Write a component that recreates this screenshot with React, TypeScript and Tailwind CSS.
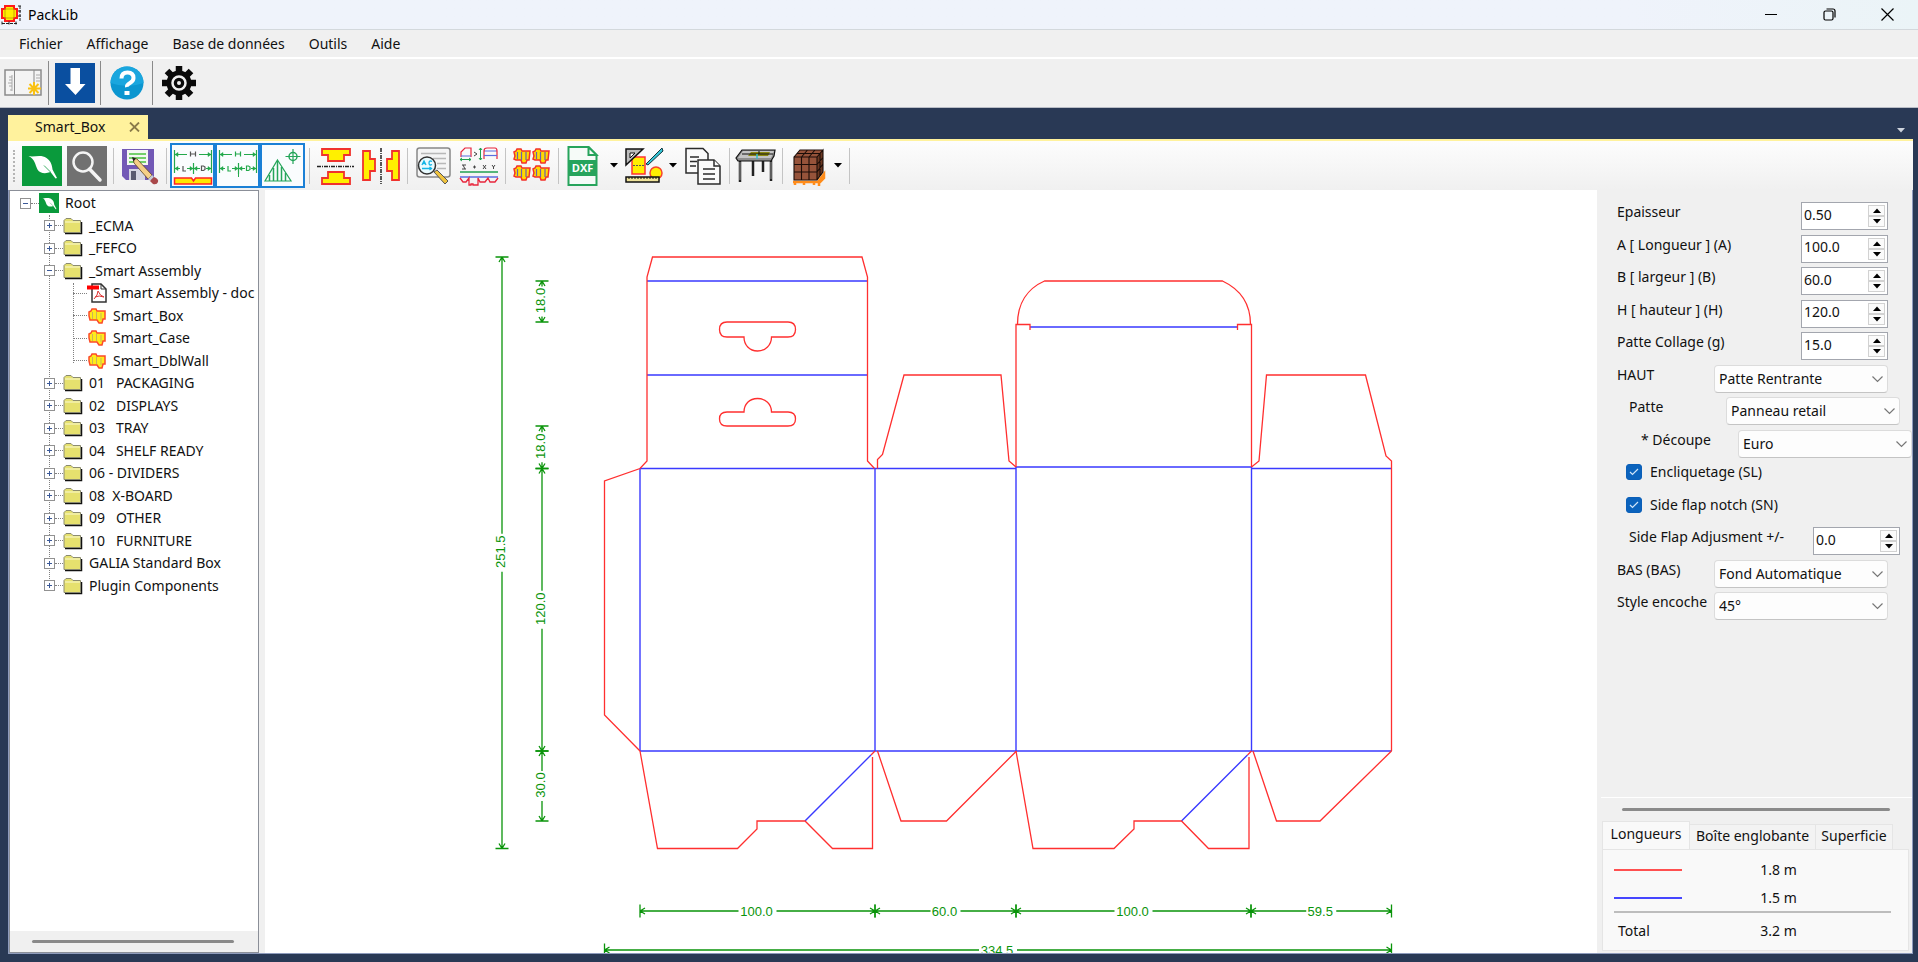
import React, { useState } from 'react';
import clsx from 'clsx';

type TreeKind = 'root' | 'folder' | 'pdf' | 'box';

interface TreeNode {
  label: string;
  kind: TreeKind;
  level: 0 | 1 | 2;
  open?: boolean;
}

const TREE: TreeNode[] = [
  { label: 'Root', kind: 'root', level: 0, open: true },
  { label: '_ECMA', kind: 'folder', level: 1 },
  { label: '_FEFCO', kind: 'folder', level: 1 },
  { label: '_Smart Assembly', kind: 'folder', level: 1, open: true },
  { label: 'Smart Assembly - doc', kind: 'pdf', level: 2 },
  { label: 'Smart_Box', kind: 'box', level: 2 },
  { label: 'Smart_Case', kind: 'box', level: 2 },
  { label: 'Smart_DblWall', kind: 'box', level: 2 },
  { label: '01   PACKAGING', kind: 'folder', level: 1 },
  { label: '02   DISPLAYS', kind: 'folder', level: 1 },
  { label: '03   TRAY', kind: 'folder', level: 1 },
  { label: '04   SHELF READY', kind: 'folder', level: 1 },
  { label: '06 - DIVIDERS', kind: 'folder', level: 1 },
  { label: '08  X-BOARD', kind: 'folder', level: 1 },
  { label: '09   OTHER', kind: 'folder', level: 1 },
  { label: '10   FURNITURE', kind: 'folder', level: 1 },
  { label: 'GALIA Standard Box', kind: 'folder', level: 1 },
  { label: 'Plugin Components', kind: 'folder', level: 1 },
];

const MENUS = ['Fichier', 'Affichage', 'Base de données', 'Outils', 'Aide'];

/* ---------- icons ---------- */

function AppIcon() {
  return (
    <svg width="21" height="20" viewBox="0 0 21 20">
      <path d="M4 1h9v3h3v9h-3v3H4v-3H1V4h3z" fill="#ffee00" stroke="#ff1a1a" strokeWidth="2" />
      <path d="M4 4h9v9H4z" fill="none" stroke="#c9a800" />
      <path d="M19 1v16M17 1h4M17 6h4M17 11h4" stroke="#222" strokeDasharray="3 1" fill="none" />
      <path d="M1 18.500h15M1 16.500v3M8 16.500v3M15 16.500v3" stroke="#222" strokeDasharray="3 1" fill="none" />
    </svg>
  );
}

function LeafIcon({ size = 40 }: { size?: number }) {
  return (
    <svg width={size} height={size} viewBox="0 0 40 40">
      <path d="M0 0h40v40H0z" fill="#0a9a3c" />
      <path
        d="M6.500 10C12 11.500 19 8 24.500 12c4.500 3 5.500 7 6 11.500l4.500 8.500-1.500.500-5-6.500c-5 2-10.500 1.500-13-2.500C13 18.500 13 13 6.500 10z"
        fill="#fff"
      />
      <path d="M22 19.500l6.500 6.500" stroke="#0a9a3c" strokeWidth=".8" />
    </svg>
  );
}

function SearchIcon() {
  return (
    <svg width="40" height="40" viewBox="0 0 40 40">
      <path d="M0 0h40v40H0z" fill="#717171" />
      <circle cx="16" cy="16" r="9.500" fill="none" stroke="#f4f4f4" strokeWidth="2.500" />
      <path d="M22.500 23l10.500 11" stroke="#f4f4f4" strokeWidth="3.500" strokeLinecap="round" />
    </svg>
  );
}

function SaveIcon() {
  return (
    <svg width="40" height="40" viewBox="0 0 40 40">
      <path d="M2 3h32v31H6l-4-4z" fill="#7359b6" />
      <path d="M7 4h21v15H7z" fill="#f4f7f2" />
      <path d="M9 8h17M9 12h17M9 16h17" stroke="#4ac43e" strokeWidth="1.500" />
      <path d="M9 23h16v11H9z" fill="#d6d6e2" />
      <path d="M11 25h5v9h-5z" fill="#5a5a70" />
      <path d="M13 12l4 1 15 16-4 4-14-16z" fill="#f5cf86" stroke="#5c4420" strokeWidth=".8" />
      <path d="M12 11l4 1.500-2.500 3z" fill="#222" />
      <path d="M28 33l4-4 2 2-4 4z" fill="#c7ccd2" />
      <path d="M30 35l4-4q5 2 4 5t-5 2z" fill="#a9484a" />
    </svg>
  );
}

function CotationIcon({ flat }: { flat?: boolean }) {
  return (
    <svg width="40" height="40" viewBox="0 0 40 40" fill="none" stroke="#23a84b">
      <path d="M1.500 4v23M38.500 4v23M2 8.500h12M26 8.500h12M2 22.500h5M14 22.500h13M33 22.500h5M20.500 17v11" strokeWidth="1.200" />
      <path d="M2 8.500l3-2v4zM38 8.500l-3-2v4zM2 22.500l3-2v4zM38 22.500l-3-2v4zM20 22.500l-3-2v4zM21 22.500l3-2v4z" fill="#23a84b" strokeWidth=".5" />
      <path d="M17.500 5.500v5M22.500 5.500v5M17.500 8h5M10 20v5h3M28.500 20h2l1.500 1v2.500l-1.500 1h-2z" stroke={flat ? '#23a84b' : '#555'} strokeWidth="1.200" />
      {!flat && <path d="M1.500 32h17l2 3 2-3h16v6h-37z" fill="#ffe800" stroke="#f22" strokeWidth="1.500" />}
      {flat && <path d="M20.500 27v4" />}
    </svg>
  );
}

function OriginIcon() {
  return (
    <svg width="40" height="40" viewBox="0 0 40 40" fill="none" stroke="#25a55a">
      <path d="M14.500 14L28 35H2z" strokeWidth="1.200" />
      <path d="M6.500 29v6M10.500 22v13M14.500 15v20M18.500 21v14M22.500 27v8" strokeWidth="1.500" />
      <circle cx="30" cy="10.500" r="4" strokeWidth="1.500" />
      <path d="M22.500 10.500h15M30 3v15" strokeWidth="1.200" />
    </svg>
  );
}

function FlipVerticalIcon() {
  return (
    <svg width="40" height="40" viewBox="0 0 40 40">
      <g fill="#fff000" stroke="#f0322d" strokeWidth="1.800">
        <path d="M6 3h28v6h-6v6H12V9H6z" />
        <path d="M6 38h28v-6h-6v-6H12v6H6z" />
      </g>
      <path d="M1 20.500h37" stroke="#222" strokeWidth="1.500" strokeDasharray="4 1 1 1" />
    </svg>
  );
}

function FlipHorizontalIcon() {
  return (
    <svg width="40" height="40" viewBox="0 0 40 40">
      <g fill="#fff000" stroke="#f0322d" strokeWidth="1.800">
        <path d="M2 5h7v8h5v12H9v9H2z" />
        <path d="M38 5h-7v8h-5v12h5v9h7z" />
      </g>
      <path d="M20 2v36" stroke="#222" strokeWidth="1.500" strokeDasharray="4 1 1 1" />
    </svg>
  );
}

function ReportIcon() {
  return (
    <svg width="40" height="40" viewBox="0 0 40 40">
      <rect x="3" y="2" width="33" height="29" rx="2.500" fill="#f5f5f5" stroke="#888" strokeWidth="1.500" />
      <path d="M7 7.500h25M19 12.500h13M23 17.500h9M23 22.500h9" stroke="#b8b8b8" strokeWidth="1.500" />
      <path d="M20 26l11 12 3-3-11-11z" fill="#f0c33c" stroke="#555" />
      <circle cx="13" cy="19.500" r="8.500" fill="#e9fbff" stroke="#333" strokeWidth="1.500" />
      <path d="M8 19l2-4 2 4M8.500 17.500h3M18 15.500q-3-1.500-3 1.500t3 1.500M8 22.500h10M15.500 21l2 1.500-2 1.500" fill="none" stroke="#12b5e6" strokeWidth="1.300" />
    </svg>
  );
}

function FormulaIcon() {
  return (
    <svg width="40" height="40" viewBox="0 0 40 40" fill="none">
      <path d="M2 11V6l4-4h6v9" stroke="#e8263c" strokeWidth="1.200" />
      <path d="M2 10h10M25 5h13" stroke="#5b6de0" strokeWidth="1.200" />
      <path d="M1 13.500h11M3 12l-2 1.500L3 15M10 12l2 1.500-2 1.500M21.500 2v12M20 4l1.500-2L23 4M20 12l1.500 2 1.500-2" stroke="#20a050" />
      <path d="M25 13V5q0-3 3-3h8q2 0 2 3v8" stroke="#e8263c" strokeWidth="1.200" />
      <path d="M25 9.500h13" stroke="#5b6de0" strokeWidth="1.200" />
      <path d="M15 6l3 2-3 2M3 19h4M3 23h4M4 19l2 4M14 21h3M15.500 19.500v3M24 19l3 4M27 19l-3 4M33 19l1.500 2L36 19M34.500 21v2" stroke="#444" />
      <path d="M1 26h38" stroke="#20a050" strokeWidth="1.300" />
      <path d="M1 31h38" stroke="#5b6de0" strokeWidth="1.500" />
      <path d="M1 32l3 4h3l3-4v7h2v-1h2v1h5v-7l2 4h5l3-4 2 4h5l3-4" stroke="#e8263c" strokeWidth="1.300" />
    </svg>
  );
}

function MiniBox({ x, y }: { x: number; y: number }) {
  return (
    <g transform={`translate(${x} ${y})`}>
      <path d="M1 4l2-1 1-2h4l1 2h8l-1 9h-2l-1 3h-4l-1-3H3l-2-1 1-3z" fill="#ffd900" stroke="#f2322b" strokeWidth="1.500" />
      <path d="M4.500 4v7M8.500 4v8M13 4v8" stroke="#6b5fae" strokeWidth="1.200" />
    </g>
  );
}

function LayoutIcon() {
  return (
    <svg width="40" height="40" viewBox="0 0 40 40">
      <MiniBox x={1} y={2} />
      <MiniBox x={20} y={2} />
      <MiniBox x={1} y={19} />
      <MiniBox x={20} y={19} />
    </svg>
  );
}

function DxfIcon() {
  return (
    <svg width="40" height="40" viewBox="0 0 40 40">
      <path d="M3.500 1h20l8 8v30h-28z" fill="#f6fbf8" stroke="#27a45c" strokeWidth="2" />
      <path d="M23.500 1v8h8z" fill="#f6fbf8" stroke="#27a45c" strokeWidth="2" />
      <path d="M3 14h29v16H3z" fill="#27a45c" />
      <text x="17.500" y="26" fill="#fff" fontSize="11" fontWeight="700" fontFamily="Open Sans" textAnchor="middle">
        DXF
      </text>
    </svg>
  );
}

function DrawIcon() {
  return (
    <svg width="40" height="40" viewBox="0 0 40 40">
      <path d="M8 11h13v17H8z" fill="#ffee00" stroke="#f33" strokeWidth="1.500" />
      <path d="M9 19.500h11" stroke="#555" strokeDasharray="2 1" />
      <circle cx="32" cy="27" r="6" fill="#ffee00" stroke="#f6432e" strokeWidth="1.500" />
      <path d="M2 3h17L2 19z" fill="#bdbdbd" stroke="#111" strokeWidth="1.500" />
      <path d="M6 7h5l-5 5z" fill="#fff" stroke="#111" />
      <path d="M38 2L22 18l2 1L39 5z" fill="#35c5d6" stroke="#15343c" />
      <path d="M2 31h33v5H2z" fill="#efe39a" stroke="#111" strokeWidth="1.500" />
      <path d="M5 31v2M8 31v2M11 31v2M14 31v2M17 31v2M20 31v2M23 31v2M26 31v2M29 31v2M32 31v2" stroke="#111" />
    </svg>
  );
}

function CopyIcon() {
  return (
    <svg width="40" height="40" viewBox="0 0 40 40" fill="#fafafa" stroke="#2b2b2b" strokeWidth="1.500">
      <path d="M3 2.500h17l5 5V27H3z" />
      <path d="M7 11h9M7 15.500h7M7 20h6" />
      <path d="M15 14h16l6 6v18H15z" />
      <path d="M31 14v6h6M20 23h12M20 28h12M20 33h12" />
    </svg>
  );
}

function TableIcon() {
  return (
    <svg width="42" height="40" viewBox="0 0 42 40">
      <path d="M5 14v22M18 14v16M28 14v12M36 14v21" stroke="#222" strokeWidth="2.500" />
      <path d="M5 16v18M36 16v17" stroke="#999" />
      <path d="M7 4h33l-1 6-3 5H3l-2-3z" fill="#8f8f8f" stroke="#111" strokeWidth="1.200" />
      <path d="M8 5h31l-3 7H3z" fill="#c4c4c4" />
      <path d="M16 6h19l-2 4H13z" fill="#8d8a10" />
      <path d="M24 5v3M7 8h31" stroke="#111" />
      <path d="M22 8v5" stroke="#3bc" strokeWidth="1.500" />
    </svg>
  );
}

function PalletIcon() {
  return (
    <svg width="40" height="40" viewBox="0 0 40 40">
      <path d="M4 36h25l6-8v4l-5 5v3M6 37v2M15 37v2M25 37v2" stroke="#ff8c1a" strokeWidth="2.500" fill="none" />
      <path d="M5 11l6-7h23v22l-6 8H5z" fill="#96533a" />
      <path d="M28 11l6-7v22l-6 8z" fill="#6b3823" />
      <path
        d="M5 11h23v23H5zM28 11l6-7v22l-6 8M5 11l6-7h23M5 18.500h23M5 26h23M12.500 11v23M20 11v23M12.500 11l6-7M20 11l6-7M28 18.500l6-7M28 26l6-8M31 8v22M8 7.500h23"
        stroke="#1c0d08"
        fill="none"
        strokeWidth="1.100"
      />
    </svg>
  );
}

function NewIcon() {
  return (
    <svg width="40" height="40" viewBox="0 0 40 40">
      <path d="M2 7h36v25H2z" fill="#f4f4f4" stroke="#8a8a8a" strokeWidth="1.500" />
      <path d="M11.500 7v25M31 7v25" stroke="#8a8a8a" />
      <path d="M9 12v16M6 14h3M6 17h3M5 20h4M6 23h3M7 27h2M33 12h4M33 15h4M33 18h4" stroke="#aaa" />
      <path d="M31 19v13M25 25.500h13M26.500 21l9 9M35.500 21l-9 9" stroke="#f9c112" strokeWidth="2" />
    </svg>
  );
}

function DownloadIcon() {
  return (
    <svg width="40" height="40" viewBox="0 0 40 40">
      <path d="M0 0h40v40H0z" fill="#0a4fa0" />
      <path d="M15.500 5h9.500v16h5.500L20.500 32 10 21h5.500z" fill="#fff" />
    </svg>
  );
}

function HelpIcon() {
  return (
    <svg width="40" height="40" viewBox="0 0 40 40">
      <circle cx="20" cy="20" r="16.500" fill="#0c96d0" />
      <path d="M3.500 20a16.500 16.500 0 0133 0q-16 6-33 0z" fill="#1aa6de" />
      <path d="M14.500 15.500q0-6 6-6t6 5.500q0 3-3.500 5t-3 4" fill="none" stroke="#fff" strokeWidth="4" />
      <path d="M17.500 28h5v4h-5z" fill="#fff" />
    </svg>
  );
}

function GearIcon() {
  return (
    <svg width="40" height="40" viewBox="0 0 40 40">
      <circle cx="20" cy="20" r="12.500" fill="#0a0a0a" />
      <path d="M20 3v34M3 20h34M8 8l24 24M32 8L8 32" stroke="#0a0a0a" strokeWidth="6.500" />
      <circle cx="20" cy="20" r="6.500" fill="#0a0a0a" stroke="#f0f0f0" strokeWidth="2.500" />
      <circle cx="20" cy="20" r="2" fill="#f0f0f0" />
    </svg>
  );
}

function FolderIcon() {
  return (
    <svg width="20" height="18" viewBox="0 0 20 18">
      <path d="M2 16.500h16.500V5" fill="none" stroke="#111" strokeWidth="1.500" />
      <path d="M1 15.500V3.500l2-2h5l2 2h7.500v12z" fill="#e6e16e" stroke="#8b8b70" />
      <path d="M2 5h15" stroke="#fbfad2" />
    </svg>
  );
}

function PdfIcon() {
  return (
    <svg width="20" height="20" viewBox="0 0 20 20">
      <path d="M5 1h9l5 5v13H5z" fill="#fff" stroke="#333" strokeWidth="1.500" />
      <path d="M14 1v5h5" fill="none" stroke="#333" />
      <path d="M0 2.500h12v4H0z" fill="#f00" />
      <path d="M11 8q2 5 6 6M11 8q0 4-4 8M8 14q4-2 9 0" fill="none" stroke="#d33" />
    </svg>
  );
}

function DesignIcon() {
  return (
    <svg width="20" height="16" viewBox="0 0 20 16">
      <path d="M2 4l2-1 1-2h4l1 2h8v8h-2l-1 4h-3l-2-3H3l-1-4z" fill="#ffec1a" stroke="#fb4a2a" strokeWidth="1.500" />
      <path d="M5.500 4v7M9.500 4v7M14 5v7" stroke="#c9b45a" />
    </svg>
  );
}

function Caret({ className }: { className?: string }) {
  return (
    <svg width="8" height="5" viewBox="0 0 8 5" className={className}>
      <path d="M0 0h8L4 4.500z" fill="currentColor" />
    </svg>
  );
}

/* ---------- toolbar parts ---------- */

function ToolButton({ label, children, active }: { label: string; children: React.ReactNode; active?: boolean }) {
  return (
    <button
      type="button"
      aria-label={label}
      className={clsx(
        'flex h-[45px] w-[45px] shrink-0 items-center justify-center',
        active && 'border-2 border-[#1b80d6] bg-[#fafcfe]'
      )}
    >
      {children}
    </button>
  );
}

function Separator({ dark }: { dark?: boolean }) {
  return (
    <div className={clsx('flex shrink-0 justify-center', dark ? 'w-[7px]' : 'w-2')}>
      <div className={clsx('w-px', dark ? 'h-11 bg-[#8a8a8a]' : 'h-9 bg-[#c4c4c4]')} />
    </div>
  );
}

function MenuArrow({ label }: { label: string }) {
  return (
    <button type="button" aria-label={label} className="flex h-10 w-[14px] shrink-0 items-center justify-center">
      <Caret className="text-black" />
    </button>
  );
}

/* ---------- tree ---------- */

function Expander({ open }: { open?: boolean }) {
  return (
    <button
      type="button"
      aria-label={open ? 'Réduire' : 'Développer'}
      className="relative h-[11px] w-[11px] shrink-0 border border-[#919191] bg-white"
    >
      <span className="absolute top-1 left-0.5 h-px w-[5px] bg-[#3b5998]" />
      {!open && <span className="absolute top-0.5 left-1 h-[5px] w-px bg-[#3b5998]" />}
    </button>
  );
}

function TreeIcon({ kind }: { kind: TreeKind }) {
  return (
    <span className="flex w-5 shrink-0 justify-center">
      {kind === 'root' && <LeafIcon size={20} />}
      {kind === 'folder' && <FolderIcon />}
      {kind === 'pdf' && <PdfIcon />}
      {kind === 'box' && <DesignIcon />}
    </span>
  );
}

function TreePanel() {
  return (
    <nav className="flex w-[250px] shrink-0 flex-col border border-[#8b8f98] bg-white">
      <div className="relative min-h-0 flex-1 overflow-hidden pt-px">
        <div className="absolute top-6 left-[39px] h-[372px] border-l border-dotted border-[#808080]" />
        <div className="absolute top-[92px] left-[63px] h-[80px] border-l border-dotted border-[#808080]" />
        <ul className="relative flex h-[405px] flex-col">
          {TREE.map((node) => (
            <li
              key={node.label}
              className={clsx(
                'flex flex-1 items-center',
                node.level === 0 && 'pl-[10px]',
                node.level === 1 && 'pl-[34px]',
                node.level === 2 && 'pl-[63px]'
              )}
            >
              {node.level < 2 && <Expander open={node.open} />}
              <span
                className={clsx(
                  'shrink-0 border-t border-dotted border-[#808080]',
                  node.level < 2 ? 'w-2' : 'w-[14px]'
                )}
              />
              <TreeIcon kind={node.kind} />
              <span className="ml-1.5 whitespace-pre">{node.label}</span>
            </li>
          ))}
        </ul>
      </div>
      <div className="flex h-[21px] items-center bg-[#f0f0f0] pr-6 pl-[22px]">
        <div className="h-[3px] flex-1 rounded-full bg-[#8a8a8a]" />
      </div>
    </nav>
  );
}

/* ---------- drawing ---------- */

const GREEN = '#0a940a';

function DimH({ x1, x2, y, text }: { x1: number; x2: number; y: number; text: string }) {
  const mid = (x1 + x2) / 2;
  const gap = text.length > 4 ? 19 : 15;
  return (
    <g>
      <path
        d={`M${x1} ${y - 6.5}v13M${x2} ${y - 6.5}v13M${x1} ${y}H${mid - gap}M${mid + gap} ${y}H${x2}M${x1} ${y}l5-3M${x1} ${y}l5 3M${x2} ${y}l-5-3M${x2} ${y}l-5 3`}
        stroke={GREEN}
        strokeWidth="1.3"
        fill="none"
      />
      <text x={mid - 1} y={y + 5} textAnchor="middle" fill={GREEN}>
        {text}
      </text>
    </g>
  );
}

function DimV({ y1, y2, x, text }: { y1: number; y2: number; x: number; text: string }) {
  const mid = (y1 + y2) / 2;
  const gap = text.length > 4 ? 19 : 15;
  return (
    <g>
      <path
        d={`M${x - 6.5} ${y1}h13M${x - 6.5} ${y2}h13M${x} ${y1}V${mid - gap}M${x} ${mid + gap}V${y2}M${x} ${y1}l-3 5M${x} ${y1}l3 5M${x} ${y2}l-3-5M${x} ${y2}l3-5`}
        stroke={GREEN}
        strokeWidth="1.3"
        fill="none"
      />
      <text transform={`translate(${x + 3} ${mid - 1}) rotate(-90)`} textAnchor="middle" fill={GREEN}>
        {text}
      </text>
    </g>
  );
}

function BoxDrawing() {
  return (
    <svg
      viewBox="265 190 1332 763"
      preserveAspectRatio="xMidYMid slice"
      className="absolute inset-0 h-full w-full font-['Liberation_Sans'] text-[13px]"
      role="img"
      aria-label="Smart_Box"
    >
      <g fill="none" stroke="#3a3aff" strokeWidth="1.4">
        <path d="M647 281H867.500M647 375H867.500M640 468.500H1016M1016 467H1251M1251 468.500H1391.500" />
        <path d="M640 468.500V751M875 468.500V751M1016 467V751M1251.500 467V751M640 751H1391.500" />
        <path d="M1030 327H1237.500M805 821l66-66M1181.500 821l66-66" />
      </g>
      <g fill="none" stroke="#ff2f2f" strokeWidth="1.3">
        <path d="M640 751l-35.500-36V481L640 468.500l7-7.500V277l5.500-20H862l5.500 20v184l7 7.500" />
        <path d="M727 322h61q7.500 0 7.500 7.500t-7.500 7.500h-16.500c0 8-6 14-14 14s-13.500-6-13.500-14h-17q-7.500 0-7.500-7.500t7.500-7.500z" />
        <path d="M727 426h61q7.500 0 7.500-7t-7.500-7h-16.500c0-8-6-13.500-14-13.500s-13.500 5.500-13.500 13.500h-17q-7.500 0-7.500 7t7.500 7z" />
        <path d="M877.500 468.500v-9l5-5L904 375h97l8 86 7 6" />
        <path d="M1016 467V324.500h14v5.500M1017.500 324.500c0-21 10-36 27-43.500h178c17 8 28 22 28 43.500M1237.500 330v-5.500h14V467" />
        <path d="M1251.500 467l7.500-6 7.500-86h99l20.500 81 5.500 5v290" />
        <path d="M640 751l17.500 97.500h80L757 829v-8h48l27.500 27.500h40V757M871 755l4-4" />
        <path d="M877.500 751l23.500 70h45.500l70-70" />
        <path d="M1016 751l17 97.500h81l20-19.500v-8h47.500l27 27.500h40.500V757M1247.500 755l4-4" />
        <path d="M1253 751l23.500 70h43.500l71.500-70" />
      </g>
      <DimV y1={257} y2={848.5} x={502} text="251.5" />
      <DimV y1={281} y2={322} x={542} text="18.0" />
      <DimV y1={426} y2={468.5} x={542} text="18.0" />
      <DimV y1={468.5} y2={751} x={542} text="120.0" />
      <DimV y1={751} y2={821} x={542} text="30.0" />
      <DimH x1={640} x2={875} y={911} text="100.0" />
      <DimH x1={875} x2={1016} y={911} text="60.0" />
      <DimH x1={1016} x2={1251} y={911} text="100.0" />
      <DimH x1={1251} x2={1391.5} y={911} text="59.5" />
      <DimH x1={604.5} x2={1391.5} y={950} text="334.5" />
    </svg>
  );
}

/* ---------- parameters ---------- */

function Row({ id, label, indent = 0, children }: { id: string; label: string; indent?: 0 | 1 | 2; children: React.ReactNode }) {
  return (
    <div
      className={clsx(
        'flex w-[271px] flex-1 items-start justify-between',
        indent === 1 && 'ml-3',
        indent === 2 && 'ml-6'
      )}
    >
      <label htmlFor={id} className="whitespace-nowrap leading-5">
        {label}
      </label>
      {children}
    </div>
  );
}

function Spin({ id, value, step, digits }: { id: string; value: number; step: number; digits: number }) {
  const [current, setCurrent] = useState(value.toFixed(digits));
  const bump = (dir: number) => setCurrent((v) => (Number(v) + dir * step).toFixed(digits));

  return (
    <div className="flex h-7 w-[87px] border border-[#a3a6ae] bg-white">
      <input
        id={id}
        value={current}
        onChange={(e) => setCurrent(e.target.value)}
        className="h-[22px] min-w-0 flex-1 pl-0.5 outline-none"
      />
      <div className="m-0.5 flex w-[17px] flex-col bg-[#f0f0f0]">
        <button
          type="button"
          aria-label="+"
          onClick={() => bump(1)}
          className="flex flex-1 items-center justify-center border border-[#d2d2d2] bg-[#fbfbfb] text-black"
        >
          <Caret className="rotate-180" />
        </button>
        <button
          type="button"
          aria-label="-"
          onClick={() => bump(-1)}
          className="flex flex-1 items-center justify-center border border-[#d2d2d2] bg-[#fbfbfb] text-black"
        >
          <Caret />
        </button>
      </div>
    </div>
  );
}

function Combo({ id, value }: { id: string; value: string }) {
  return (
    <div className="relative h-7 w-[174px]">
      <select
        id={id}
        defaultValue={value}
        className="h-full w-full appearance-none rounded-sm border border-[#dcdcdc] border-b-[#c4c4c4] bg-[#fdfdfd] pl-1 outline-none"
      >
        <option>{value}</option>
      </select>
      <svg width="11" height="7" viewBox="0 0 11 7" className="pointer-events-none absolute top-[11px] right-[5px]">
        <path d="M.5.500l5 5 5-5" fill="none" stroke="#777" strokeWidth="1.200" />
      </svg>
    </div>
  );
}

function Check({ id, label }: { id: string; label: string }) {
  const [on, setOn] = useState(true);
  return (
    <div className="flex flex-1 items-start pl-[9px]">
      <label htmlFor={id} className="relative flex items-center gap-2 leading-5">
        <input
          id={id}
          type="checkbox"
          checked={on}
          onChange={() => setOn(!on)}
          className="h-4 w-4 appearance-none rounded-[3px] border border-[#0b5fb8] bg-white checked:bg-[#0b63bd]"
        />
        {on && (
          <svg width="10" height="8" viewBox="0 0 10 8" className="pointer-events-none absolute top-1.5 left-[3px]">
            <path d="M1 4l2.500 2.500L9 1" fill="none" stroke="#cfe4f8" strokeWidth="1.200" />
          </svg>
        )}
        {label}
      </label>
    </div>
  );
}

function ParameterPanel() {
  return (
    <aside className="flex w-[315px] shrink-0 flex-col overflow-hidden bg-[#f0f0f0]">
      <div className="min-h-0 flex-1 overflow-hidden pt-3 pl-5">
        <form className="flex h-[423px] flex-col">
          <Row id="ep" label="Epaisseur">
            <Spin id="ep" value={0.5} step={0.1} digits={2} />
          </Row>
          <Row id="a" label="A [ Longueur ] (A)">
            <Spin id="a" value={100} step={1} digits={1} />
          </Row>
          <Row id="b" label="B [ largeur ] (B)">
            <Spin id="b" value={60} step={1} digits={1} />
          </Row>
          <Row id="h" label="H [ hauteur ] (H)">
            <Spin id="h" value={120} step={1} digits={1} />
          </Row>
          <Row id="g" label="Patte Collage (g)">
            <Spin id="g" value={15} step={1} digits={1} />
          </Row>
          <Row id="haut" label="HAUT">
            <Combo id="haut" value="Patte Rentrante" />
          </Row>
          <Row id="patte" label="Patte" indent={1}>
            <Combo id="patte" value="Panneau retail" />
          </Row>
          <Row id="decoupe" label="* Découpe" indent={2}>
            <Combo id="decoupe" value="Euro" />
          </Row>
          <Check id="sl" label="Encliquetage (SL)" />
          <Check id="sn" label="Side flap notch (SN)" />
          <Row id="sfa" label="Side Flap Adjusment +/-" indent={1}>
            <Spin id="sfa" value={0} step={1} digits={1} />
          </Row>
          <Row id="bas" label="BAS (BAS)">
            <Combo id="bas" value="Fond Automatique" />
          </Row>
          <Row id="encoche" label="Style encoche">
            <Combo id="encoche" value="45°" />
          </Row>
        </form>
      </div>

      <div className="ml-1 flex h-6 shrink-0 items-center border-t border-white pr-[22px] pl-[21px]">
        <div className="h-[3px] flex-1 rounded-full bg-[#8a8a8a]" />
      </div>

      <div className="mr-[3px] mb-0.5 ml-[5px] shrink-0">
        <div role="tablist" className="flex items-end">
          <button type="button" role="tab" aria-selected="true" className="h-7 w-[88px] border border-b-0 border-[#e5e5e5] bg-[#f9f9f9] pb-1">
            Longueurs
          </button>
          <button type="button" role="tab" className="h-[25px] w-[125px] border-t border-[#e5e5e5] bg-[#f3f3f3] pb-0.5">
            Boîte englobante
          </button>
          <button type="button" role="tab" className="h-[25px] w-[78px] border-x border-t border-[#e5e5e5] bg-[#f3f3f3] pb-0.5">
            Superficie
          </button>
        </div>
        <div className="h-[102px] border border-[#e5e5e5] bg-[#f9f9f9] pt-1.5 pr-[17px] pl-[11px]">
          <table className="w-full border-collapse">
            <tbody>
              <tr className="h-7">
                <td className="w-[68px]">
                  <div className="h-0.5 bg-[#ff5050]" />
                </td>
                <td className="pr-4 text-center">1.8 m</td>
              </tr>
              <tr className="h-7">
                <td>
                  <div className="h-0.5 bg-[#4646ff]" />
                </td>
                <td className="pr-4 text-center">1.5 m</td>
              </tr>
              <tr className="h-9 border-t-2 border-[#bdbdbd]">
                <td className="pl-1">Total</td>
                <td className="pr-4 text-center">3.2 m</td>
              </tr>
            </tbody>
          </table>
        </div>
      </div>
    </aside>
  );
}

/* ---------- window ---------- */

function TitleBar() {
  return (
    <header className="flex h-[30px] shrink-0 items-center border-b border-[#d3d8dc] bg-linear-to-r from-[#eff3fb] from-85% to-[#ebf4f7] pr-0.5 text-black">
      <div className="flex flex-1 items-center gap-1.5 pl-px">
        <AppIcon />
        <span>PackLib</span>
      </div>
      <button type="button" aria-label="Réduire la fenêtre" className="flex h-full w-[58px] items-center justify-center">
        <span className="h-px w-3 bg-black" />
      </button>
      <button type="button" aria-label="Restaurer" className="flex h-full w-[58px] items-center justify-center">
        <svg width="13" height="13" viewBox="0 0 13 13" fill="none" stroke="#000" strokeWidth="1.200">
          <rect x="1" y="3" width="9" height="9" rx="1.500" />
          <path d="M3.500 1H10q2 0 2 2v6.500" />
        </svg>
      </button>
      <button type="button" aria-label="Fermer" className="flex h-full w-[58px] items-center justify-center">
        <svg width="13" height="13" viewBox="0 0 13 13" stroke="#000" strokeWidth="1.200">
          <path d="M.5.500l12 12M12.500.500l-12 12" />
        </svg>
      </button>
    </header>
  );
}

export default function App() {
  return (
    <div className="flex h-screen flex-col overflow-hidden bg-[#293955] font-['Noto_Sans',sans-serif] text-sm text-[#111]">
      <TitleBar />

      <div className="flex h-7 shrink-0 items-center border-b border-white bg-[#f0f0f0] pl-[7px]">
        {MENUS.map((menu) => (
          <button key={menu} type="button" className="px-3">
            {menu}
          </button>
        ))}
      </div>

      <div className="flex h-[50px] shrink-0 items-center border-y border-t-white border-b-[#b9bdc6] bg-[#f0f0f0]">
        <ToolButton label="Nouveau">
          <NewIcon />
        </ToolButton>
        <Separator dark />
        <ToolButton label="Télécharger">
          <DownloadIcon />
        </ToolButton>
        <Separator dark />
        <ToolButton label="Aide en ligne">
          <HelpIcon />
        </ToolButton>
        <Separator dark />
        <ToolButton label="Options">
          <GearIcon />
        </ToolButton>
      </div>

      <div className="flex h-[31px] shrink-0 items-end pl-2">
        <div className="flex h-6 w-[140px] items-center bg-[#fff29d] pr-2 pl-[27px]">
          <span className="flex-1">Smart_Box</span>
          <button type="button" aria-label="Fermer l'onglet">
            <svg width="11" height="10" viewBox="0 0 11 10" stroke="#8a7a4a" strokeWidth="1.800">
              <path d="M1 .5l9 9M10 .5l-9 9" />
            </svg>
          </button>
        </div>
        <div className="flex-1" />
        <button type="button" aria-label="Liste des documents" className="mr-3 pb-1.5">
          <Caret className="w-2.5 text-[#ced4dd]" />
        </button>
      </div>

      <main className="mr-[5px] mb-2 ml-2 flex min-h-0 flex-1 flex-col border-t-2 border-[#fff29d]">
        <div className="flex h-[49px] shrink-0 items-center bg-linear-to-b from-[#fdfdfd] to-[#f0f0f0]">
          <div className="ml-[5px] h-8 w-1.5 shrink-0 border-l-2 border-dotted border-[#b5b5b5]" />
          <ToolButton label="Bibliothèque">
            <LeafIcon />
          </ToolButton>
          <ToolButton label="Rechercher">
            <SearchIcon />
          </ToolButton>
          <Separator />
          <ToolButton label="Enregistrer">
            <SaveIcon />
          </ToolButton>
          <Separator />
          <ToolButton label="Cotations" active>
            <CotationIcon />
          </ToolButton>
          <ToolButton label="Cotations courtes" active>
            <CotationIcon flat />
          </ToolButton>
          <ToolButton label="Origine" active>
            <OriginIcon />
          </ToolButton>
          <Separator />
          <ToolButton label="Symétrie horizontale">
            <FlipVerticalIcon />
          </ToolButton>
          <ToolButton label="Symétrie verticale">
            <FlipHorizontalIcon />
          </ToolButton>
          <Separator />
          <ToolButton label="Rapport">
            <ReportIcon />
          </ToolButton>
          <ToolButton label="Formules">
            <FormulaIcon />
          </ToolButton>
          <Separator />
          <ToolButton label="Imposition">
            <LayoutIcon />
          </ToolButton>
          <Separator />
          <ToolButton label="Exporter en DXF">
            <DxfIcon />
          </ToolButton>
          <MenuArrow label="Autres formats" />
          <ToolButton label="Dessiner">
            <DrawIcon />
          </ToolButton>
          <MenuArrow label="Autres dessins" />
          <ToolButton label="Copier">
            <CopyIcon />
          </ToolButton>
          <Separator />
          <ToolButton label="Table de découpe">
            <TableIcon />
          </ToolButton>
          <Separator />
          <ToolButton label="Palettisation">
            <PalletIcon />
          </ToolButton>
          <MenuArrow label="Autres palettisations" />
          <Separator />
        </div>

        <div className="flex min-h-0 flex-1 border-r border-b border-l border-[#8e9bbc]">
          <TreePanel />
          <div className="w-1.5 shrink-0 bg-[#f0f0f0]" />
          <section className="relative min-w-0 flex-1 overflow-hidden bg-white">
            <BoxDrawing />
          </section>
          <ParameterPanel />
        </div>
      </main>
    </div>
  );
}
